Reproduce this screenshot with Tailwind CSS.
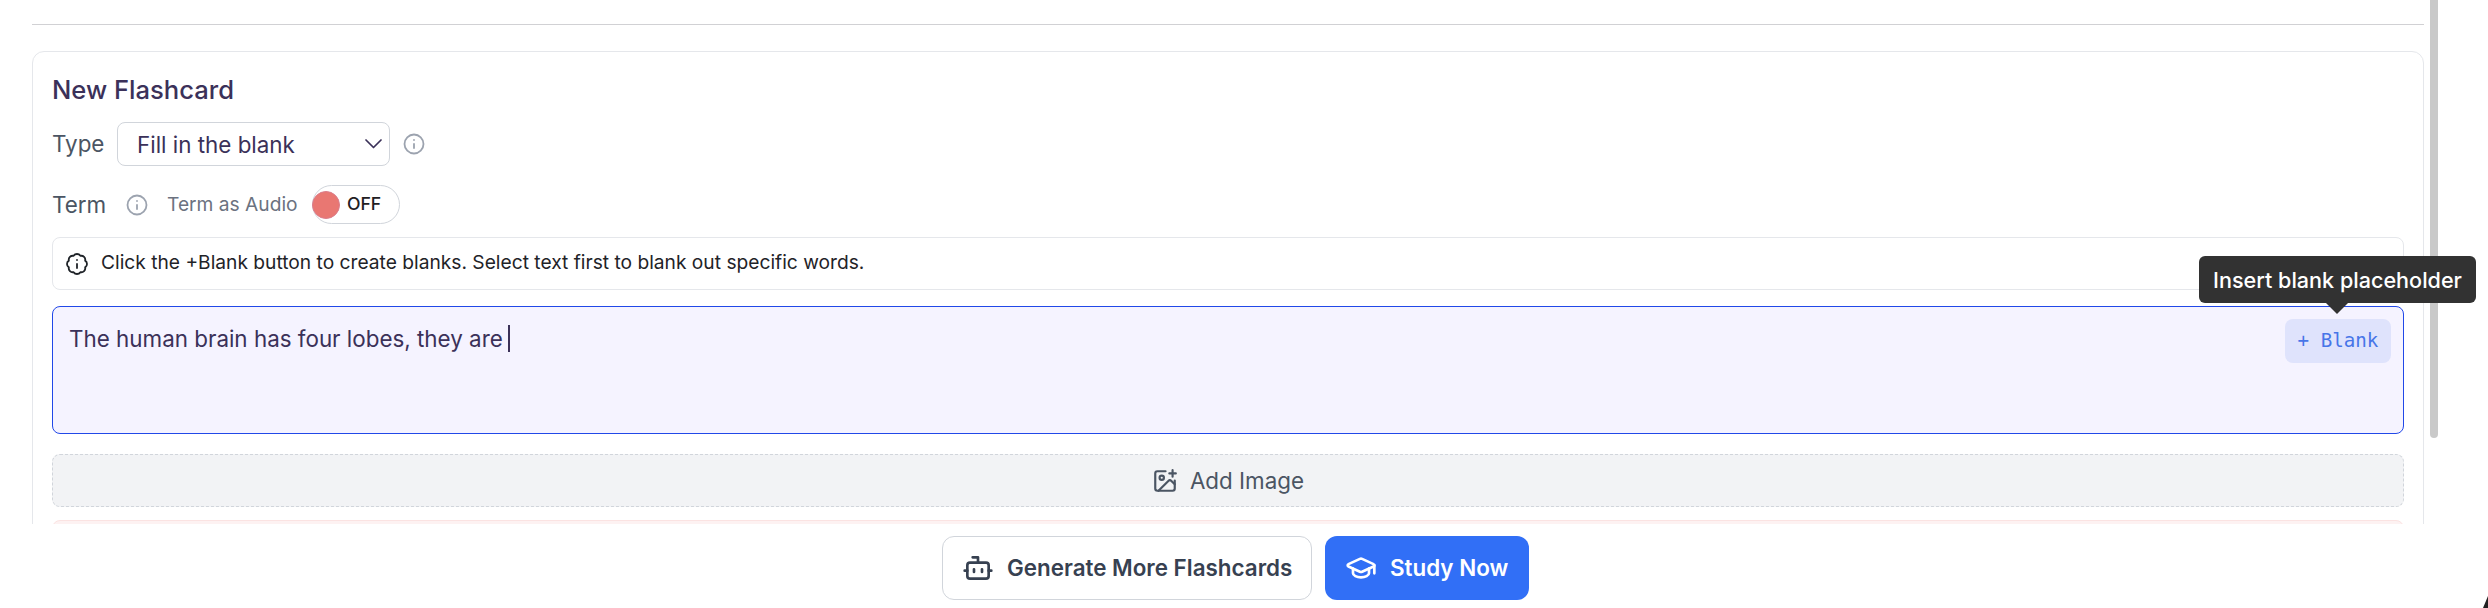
<!DOCTYPE html>
<html lang="en">
<head>
    <meta charset="UTF-8">
    <meta name="viewport" content="width=device-width, initial-scale=1.0">
    <title>New Flashcard</title>
    <script src="https://cdn.jsdelivr.net/npm/@tailwindcss/browser@4"></script>
</head>
<body class="bg-white font-['Inter',sans-serif]">
    <div class="relative w-[2488px] h-[608px] overflow-hidden">
        <!-- Scrollable editor -->
        <main class="h-[524px] overflow-hidden pl-8 pr-16 pt-6">
            <hr class="border-[#d1d1d4]">

            <section class="mt-[26px] h-[600px] border border-[#e5e7eb] rounded-xl px-[19px] pt-5">
                <h2 class="h-9 leading-9 text-[25.6px] font-medium text-[#3b3159]">New Flashcard</h2>

                <!-- Card type -->
                <div class="flex items-center h-11 mt-[14px]">
                    <label class="w-[65px] text-[22.4px] text-[#4b5563]">Type</label>
                    <button class="flex items-center justify-between w-[273px] h-11 pl-[19px] pr-[7px] border border-[#d1d5db] rounded-lg text-[22.4px] text-[#3b3159]">
                        <span class="pt-0.5">Fill in the blank</span>
                        <svg class="w-[17px] h-[10px]" viewBox="0 0 17 10" fill="none" stroke="currentColor" stroke-width="1.7" stroke-linecap="round" stroke-linejoin="round"><path d="M1 1l7.500 7.500L16 1"/></svg>
                    </button>
                    <svg class="w-6 h-6 ml-3 text-[#9ca3af]" viewBox="0 0 24 24" fill="none" stroke="currentColor" stroke-width="1.800" stroke-linecap="round" stroke-linejoin="round"><circle cx="12" cy="12" r="9.500"/><path d="M12 16v-4M12 8h.01"/></svg>
                </div>

                <!-- Term options -->
                <div class="flex items-center h-[39px] mt-[19px]">
                    <label class="w-[73px] pt-px text-[22.4px] text-[#4b5563]">Term</label>
                    <svg class="w-6 h-6 text-[#9ca3af]" viewBox="0 0 24 24" fill="none" stroke="currentColor" stroke-width="1.800" stroke-linecap="round" stroke-linejoin="round"><circle cx="12" cy="12" r="9.500"/><path d="M12 16v-4M12 8h.01"/></svg>
                    <span class="w-[145px] ml-[18px] text-[19.2px] text-[#6b7280]">Term as Audio</span>
                    <button class="flex items-center w-[88px] h-[39px] border border-[#d1d5db] rounded-full text-[17.6px] font-medium text-[#1f2023]">
                        <span class="w-7 h-7 mr-[7px] -ml-px rounded-full bg-[#e97772] border border-[#db7d8b]"></span>OFF
                    </button>
                </div>

                <!-- Hint -->
                <div class="flex items-center w-[2352px] h-[53px] mt-[13px] px-3 border border-[#e5e7eb] rounded-lg text-[19.2px] text-[#1f2328]">
                    <svg class="w-6 h-6 mr-3" viewBox="0 0 24 24" fill="none" stroke="currentColor" stroke-width="1.800" stroke-linecap="round" stroke-linejoin="round"><path d="M3.850 8.620a4 4 0 0 1 4.780-4.770 4 4 0 0 1 6.740 0 4 4 0 0 1 4.780 4.780 4 4 0 0 1 0 6.740 4 4 0 0 1-4.770 4.780 4 4 0 0 1-6.750 0 4 4 0 0 1-4.780-4.770 4 4 0 0 1 0-6.760Z"/><path d="M12 16v-4M12 8h.01"/></svg>
                    <span class="pb-0.5">Click the +Blank button to create blanks. Select text first to blank out specific words.</span>
                </div>

                <!-- Term input -->
                <div class="relative flex w-[2352px] h-32 mt-4 pl-4 pt-[18px] border border-[#2148e8] rounded-lg bg-[#f5f3ff] text-[22.4px] leading-7 text-[#3b3159]">
                    <span>The human brain has four lobes, they are</span>
                    <span class="w-[2px] h-[27px] ml-[5px] bg-[#3b3159]"></span>
                    <button class="absolute right-3 top-3 w-[106px] h-11 rounded-lg bg-[#dfe3fc] font-['DejaVu_Sans_Mono',monospace] text-[19.2px] text-[#4775e8]">+ Blank</button>
                </div>

                <button class="flex items-center justify-center gap-3 w-[2352px] h-[53px] mt-5 border border-dashed border-[#d1d5db] rounded-lg bg-[#f2f3f5] text-[22.4px] text-[#4b5563]">
                    <svg class="w-[26px] h-[26px]" viewBox="0 0 24 24" fill="none" stroke="currentColor" stroke-width="2" stroke-linecap="round" stroke-linejoin="round"><path d="M16 5h6M19 2v6M21 11.500V19a2 2 0 0 1-2 2H5a2 2 0 0 1-2-2V5a2 2 0 0 1 2-2h7.500"/><path d="m21 15-3.086-3.086a2 2 0 0 0-2.828 0L6 21"/><circle cx="9" cy="9" r="2"/></svg>
                    Add Image
                </button>

                <div class="w-[2352px] h-[53px] mt-[13px] border border-[#fbe3e2] rounded-lg bg-[#fdf2f2]"></div>
            </section>
        </main>

        <!-- Footer actions -->
        <footer class="flex gap-[13px] pl-[942px] pt-3 text-[22.4px] font-semibold">
            <button class="flex items-center w-[370px] h-16 pl-[19px] border border-[#d1d5db] rounded-xl text-[#374151]">
                <svg class="w-8 h-8 mr-[13px]" viewBox="0 0 24 24" fill="none" stroke="currentColor" stroke-width="2" stroke-linecap="round" stroke-linejoin="round"><path d="M12 8V4H8"/><rect width="16" height="12" x="4" y="8" rx="2"/><path d="M2 14h2M20 14h2M15 13v2M9 13v2"/></svg>
                Generate More Flashcards
            </button>
            <button class="flex items-center w-[204px] h-16 pl-5 rounded-xl bg-[#316ff6] text-white">
                <svg class="w-8 h-8 mr-[13px]" viewBox="0 0 24 24" fill="none" stroke="currentColor" stroke-width="2" stroke-linecap="round" stroke-linejoin="round"><path d="M21.420 10.922a1 1 0 0 0-.019-1.838L12.830 5.180a2 2 0 0 0-1.660 0L2.600 9.080a1 1 0 0 0 0 1.832l8.570 3.908a2 2 0 0 0 1.660 0z"/><path d="M22 10v6M6 12.500V16a6 3 0 0 0 12 0v-3.500"/></svg>
                Study Now
            </button>
        </footer>

        <!-- Scrollbar thumb -->
        <div class="absolute left-[2430px] top-0 w-2 h-[438px] rounded-b-full bg-[#c9c9c9]"></div>

        <!-- Tooltip -->
        <div class="absolute left-[2199px] top-64 w-[277px] h-[47px] rounded-md bg-[#323232] text-center text-[21.6px] leading-[48px] font-medium text-white">
            Insert blank placeholder
            <svg class="absolute left-[127px] top-[47px] w-[22px] h-[11px]" viewBox="0 0 22 11" fill="#323232"><path d="M0 0h22L11 11z"/></svg>
        </div>
        <svg class="absolute right-0 bottom-0 w-[5px] h-[12px]" viewBox="0 0 5 12" fill="#222"><path d="M5 0v12H0z"/></svg>
    </div>
</body>
</html>
